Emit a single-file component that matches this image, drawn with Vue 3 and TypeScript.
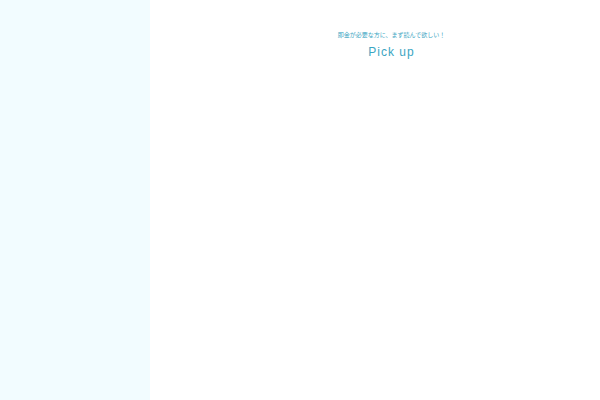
<script setup lang="ts">
const lead: string = '即金が必要な方に、まず読んで欲しい！'
const title: string = 'Pick up'
</script>

<template>
  <div class="layout">
    <aside class="side"></aside>
    <main class="content">
      <header class="heading">
        <p class="lead">{{ lead }}</p>
        <h2 class="title">{{ title }}</h2>
      </header>
    </main>
  </div>
</template>

<style>
body {
  margin: 0;
  background: #fff;
}
</style>

<style scoped>
.layout {
  display: grid;
  grid-template-columns: 1fr 3fr;
  min-height: 100vh;
  font-family: "Liberation Sans", "Noto Sans CJK JP", sans-serif;
  color: #3ba5c2;
}
.side {
  background: #f2fcff;
}
.content {
  padding: 30px 0 30px 33px;
}
.heading {
  text-align: center;
}
.lead {
  margin: 0;
  font-family: "Noto Sans CJK JP", sans-serif;
  font-size: 6px;
  line-height: 9px;
}
.title {
  margin: 5px 0 0;
  font-size: 12px;
  font-weight: 400;
  line-height: 16px;
  letter-spacing: 1px;
}
</style>
